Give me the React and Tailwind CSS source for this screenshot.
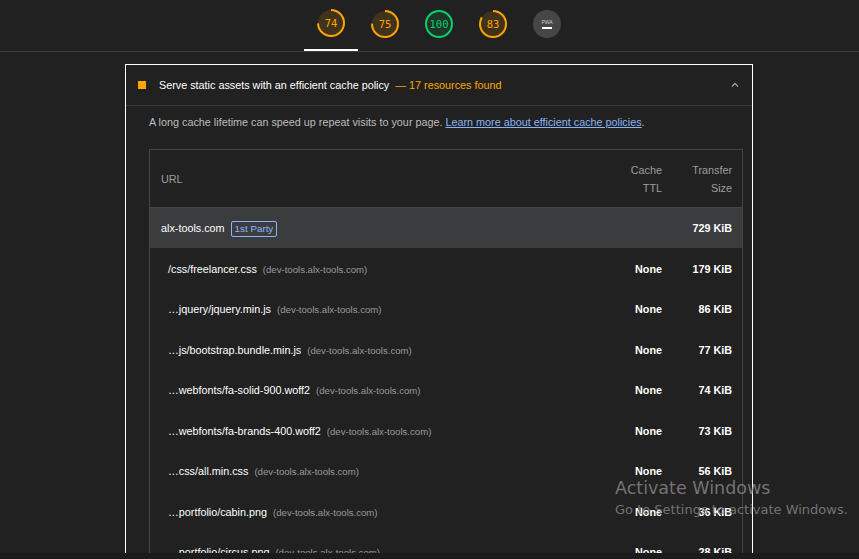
import React from 'react';

const scores = [
  { value: 74, color: '#ffa400', fill: 'rgba(255,164,0,0.14)' },
  { value: 75, color: '#ffa400', fill: 'rgba(255,164,0,0.14)' },
  { value: 100, color: '#0cce6b', fill: 'rgba(12,206,107,0.12)' },
  { value: 83, color: '#ffa400', fill: 'rgba(255,164,0,0.14)' },
];

const rows = [
  { url: '/css/freelancer.css', ttl: 'None', size: '179 KiB' },
  { url: '…jquery/jquery.min.js', ttl: 'None', size: '86 KiB' },
  { url: '…js/bootstrap.bundle.min.js', ttl: 'None', size: '77 KiB' },
  { url: '…webfonts/fa-solid-900.woff2', ttl: 'None', size: '74 KiB' },
  { url: '…webfonts/fa-brands-400.woff2', ttl: 'None', size: '73 KiB' },
  { url: '…css/all.min.css', ttl: 'None', size: '56 KiB' },
  { url: '…portfolio/cabin.png', ttl: 'None', size: '36 KiB' },
  { url: '…portfolio/circus.png', ttl: 'None', size: '28 KiB' },
];

const Gauge = ({ value, color, fill }) => {
  const r = 13;
  const c = 2 * Math.PI * r;
  return (
    <svg width="30" height="30" viewBox="0 0 30 30">
      <circle cx="15" cy="15" r={r} fill={fill} />
      <circle
        cx="15"
        cy="15"
        r={r}
        fill="none"
        stroke={color}
        strokeWidth="2"
        strokeDasharray={`${(c * value) / 100} ${c}`}
        transform="rotate(-90 15 15)"
      />
      <text
        x="15"
        y="19"
        textAnchor="middle"
        fontSize="10.5"
        fill={color}
        style={{ fontFamily: '"DejaVu Sans Mono", monospace' }}
      >
        {value}
      </text>
    </svg>
  );
};

const App = () => {
  return (
    <div className="relative h-[559px] w-[859px] overflow-hidden bg-[#212121] font-['Liberation_Sans',Arial,sans-serif]">
      {/* Score tabs */}
      <div className="flex h-[52px] justify-center border-b border-[#3c3c3c] pl-[19px]">
        {scores.map((s, i) => (
          <div
            key={i}
            className={`flex w-[54px] items-center justify-center pb-[3px] ${
              i === 0 ? 'border-b-2 border-white' : ''
            }`}
          >
            <Gauge {...s} />
          </div>
        ))}
        <div className="flex w-[54px] items-center justify-center pb-[3px]">
          <div className="flex h-[28px] w-[28px] flex-col items-center justify-center rounded-full bg-[#464646]">
            <span className="text-[5px] leading-[6px] text-[#cfcfcf]">PWA</span>
            <span className="mt-[2px] h-[2px] w-[10px] bg-white"></span>
          </div>
        </div>
      </div>

      {/* Audit card */}
      <div className="pl-[19px] pt-[12px]">
        <div className="mx-auto w-[628px] border border-white">
          <div className="flex h-[41px] items-center border-b border-[#3c3c3c] pl-[12px] pr-[12px]">
            <span className="h-[8px] w-[8px] bg-[#ffa400]"></span>
            <span className="ml-[13px] text-[10.8px] text-white">
              Serve static assets with an efficient cache policy
            </span>
            <span className="ml-[6px] text-[10.8px] text-[#ffa400]">— 17 resources found</span>
            <svg className="ml-auto" width="10" height="10" viewBox="0 0 10 10">
              <path d="M2 6.5 L5 3.5 L8 6.5" fill="none" stroke="#9e9e9e" strokeWidth="1.3" />
            </svg>
          </div>

          <div className="pl-[23px] pr-[9px]">
            <p className="pt-[9px] text-[10.8px] leading-[15px] text-[#bdbdbd]">
              A long cache lifetime can speed up repeat visits to your page.{' '}
              <span className="text-[#8ab4f8] underline">Learn more about efficient cache policies</span>.
            </p>

            <div className="mt-[19px] border border-[#454545]">
              <div className="grid h-[58px] grid-cols-[1fr_70px_70px] items-center border-b border-[#454545] text-[10.8px] leading-[18px] text-[#9e9e9e]">
                <div className="pl-[11px]">URL</div>
                <div className="pr-[10px] text-right">
                  Cache
                  <br />
                  TTL
                </div>
                <div className="pr-[10px] text-right">
                  Transfer
                  <br />
                  Size
                </div>
              </div>

              <div className="grid h-[40px] grid-cols-[1fr_70px_70px] items-center bg-[#3b3c3e] pt-[1px]">
                <div className="flex items-center pl-[11px]">
                  <span className="text-[10.8px] text-white">alx-tools.com</span>
                  <span className="ml-[6px] rounded-[2px] border border-[#8ab4f8] px-[3px] text-[9.8px] leading-[14px] text-[#8ab4f8]">
                    1st Party
                  </span>
                </div>
                <div></div>
                <div className="pr-[10px] text-right text-[10.8px] font-bold text-white">729 KiB</div>
              </div>

              {rows.map((row, i) => (
                <div key={i} className="grid h-[40.5px] grid-cols-[1fr_70px_70px] items-center pt-[1px]">
                  <div className="flex items-baseline pl-[18px]">
                    <span className="text-[10.8px] text-white">{row.url}</span>
                    <span className="ml-[6px] text-[9.6px] text-[#9a9a9a]">(dev-tools.alx-tools.com)</span>
                  </div>
                  <div className="pr-[10px] text-right text-[10.8px] font-bold text-white">{row.ttl}</div>
                  <div className="pr-[10px] text-right text-[10.8px] font-bold text-white">{row.size}</div>
                </div>
              ))}
            </div>
          </div>
        </div>
      </div>

      {/* Windows watermark */}
      <div className="pointer-events-none absolute left-[615px] top-[476px] font-['DejaVu_Sans',sans-serif] text-[#8a8a8a]/80">
        <div className="text-[17.5px] leading-[24px]">Activate Windows</div>
        <div className="text-[13px] leading-[20px]">Go to Settings to activate Windows.</div>
      </div>

      {/* Taskbar edge */}
      <div className="absolute bottom-0 left-0 h-[6px] w-full bg-[#1b1b1b]"></div>
    </div>
  );
};

export default App;
